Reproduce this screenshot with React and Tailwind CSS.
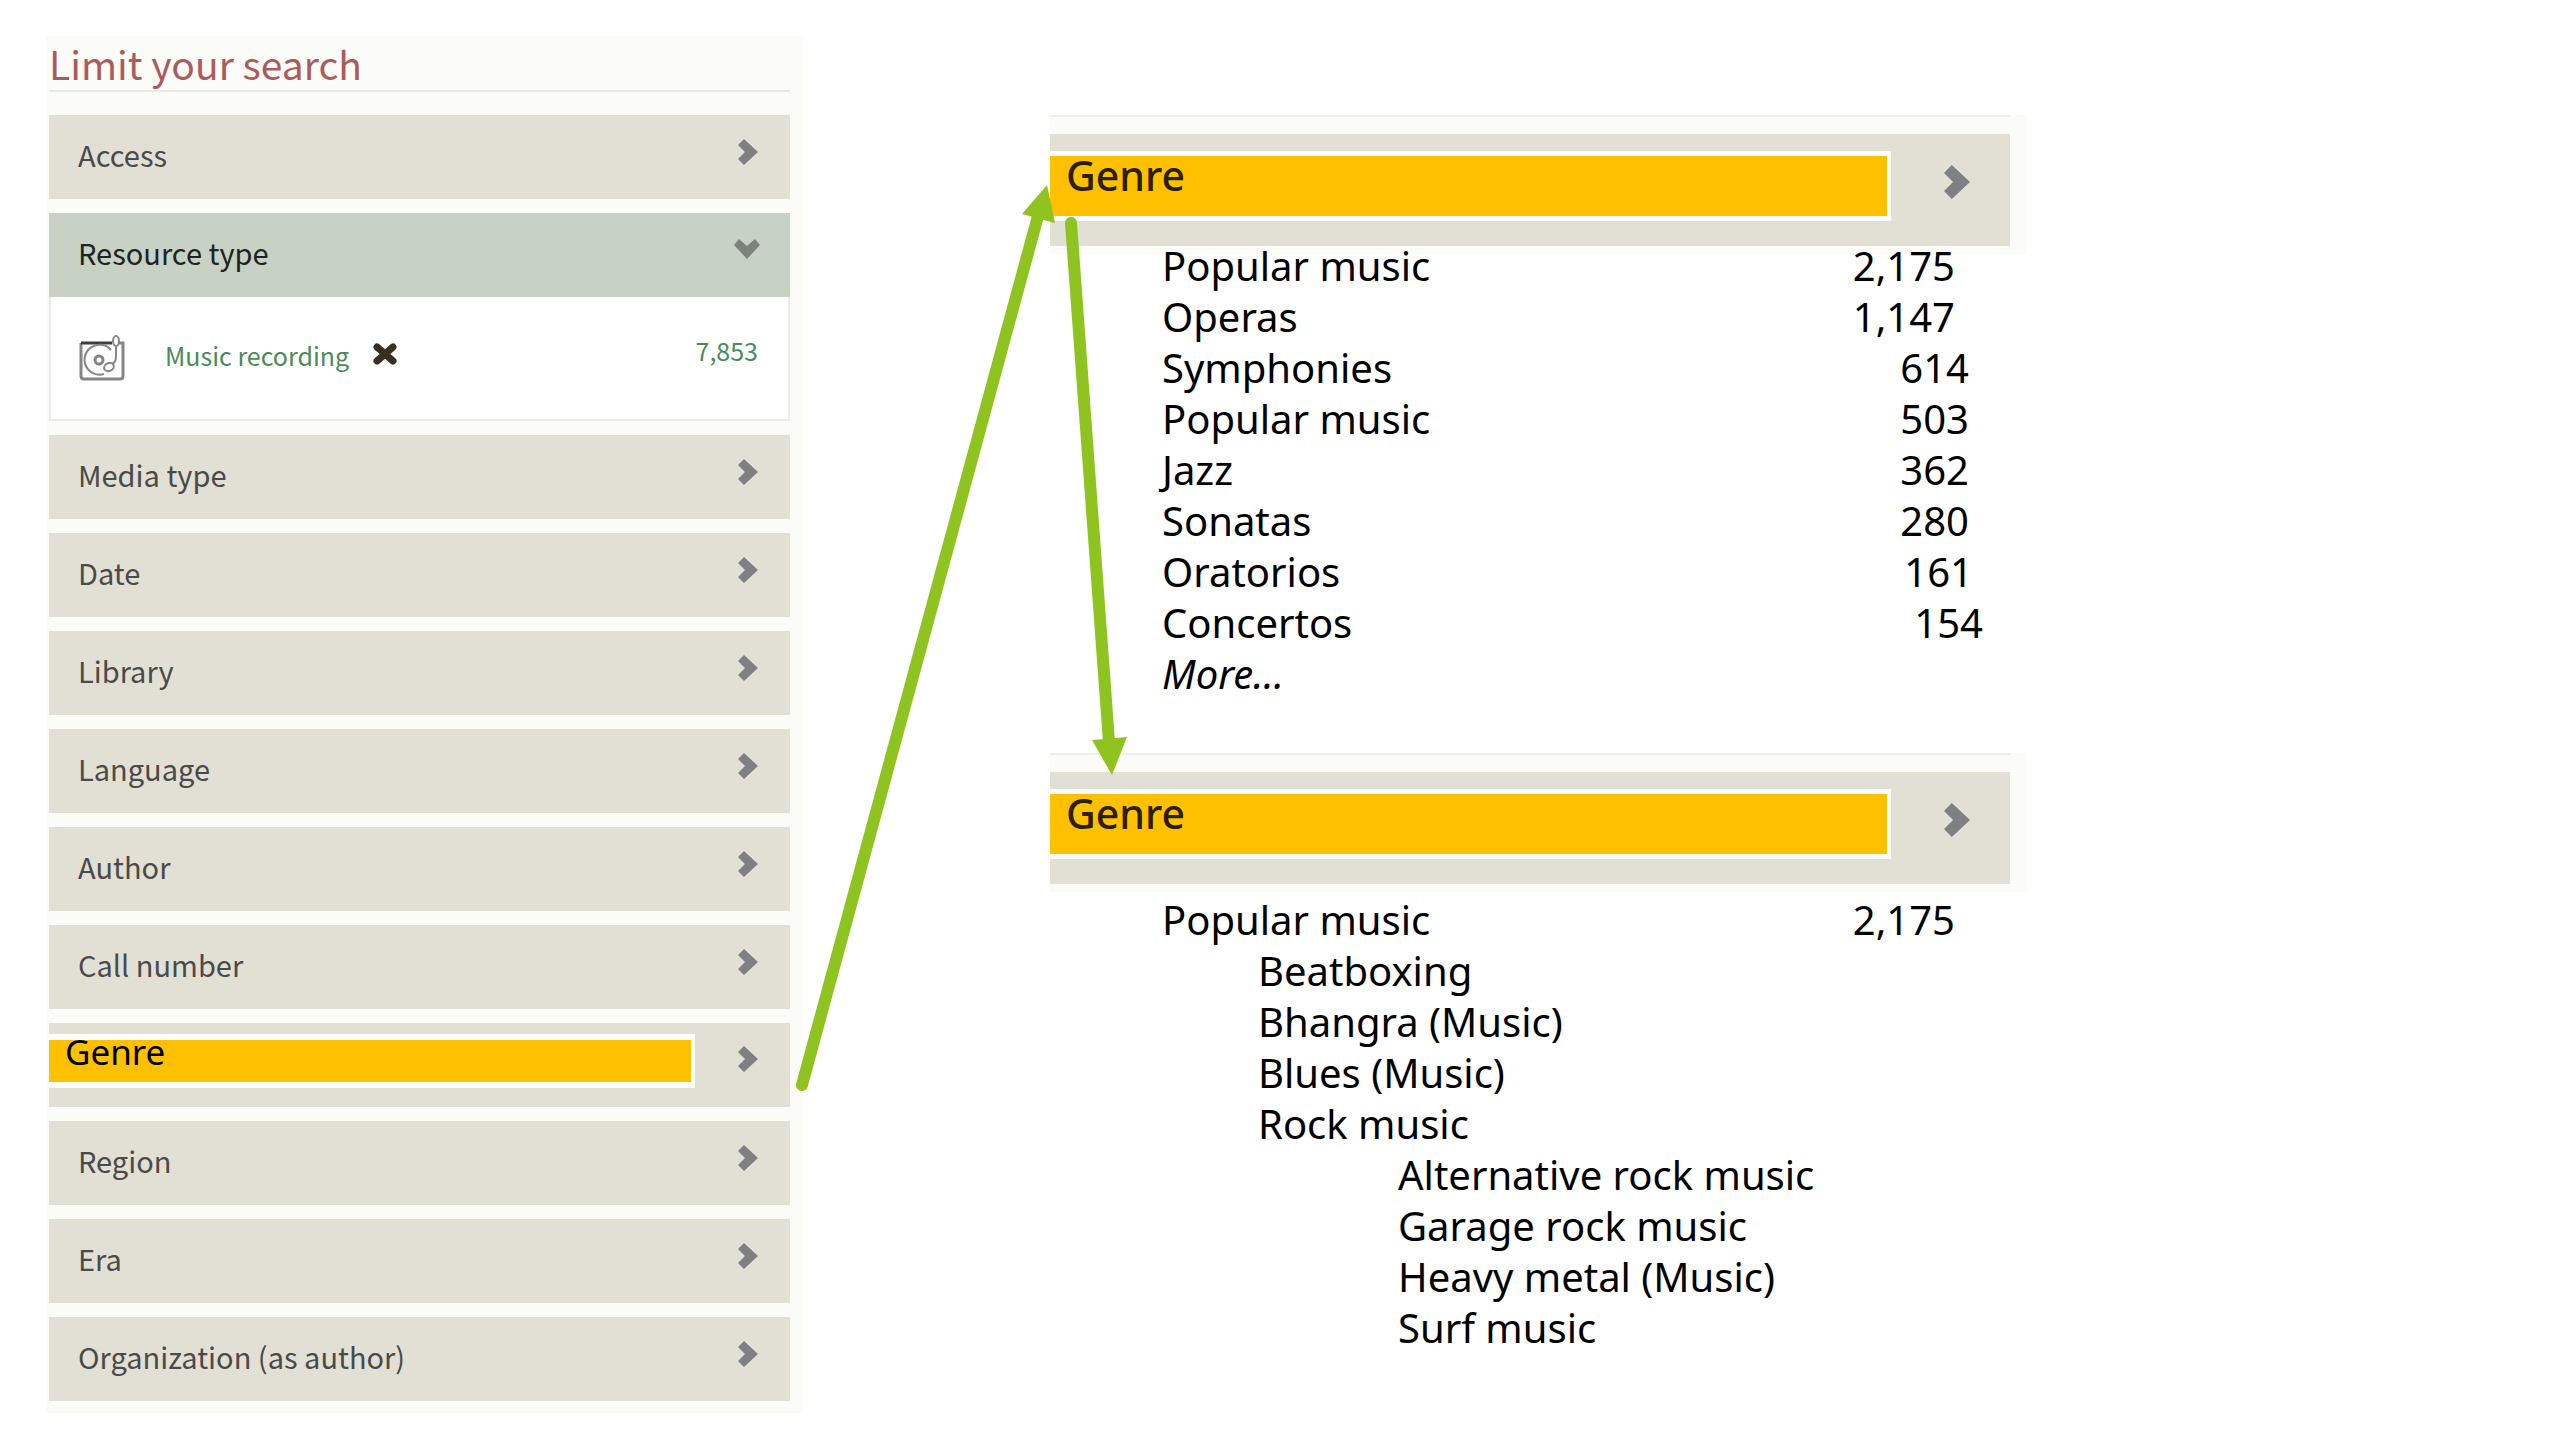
import React, { useState } from "react";

const facets = [
  { name: "Access" },
  { name: "Resource type", open: true },
  { name: "Media type" },
  { name: "Date" },
  { name: "Library" },
  { name: "Language" },
  { name: "Author" },
  { name: "Call number" },
  { name: "Genre", highlighted: true },
  { name: "Region" },
  { name: "Era" },
  { name: "Organization (as author)" },
];

const topGenres = [
  { name: "Popular music", count: "2,175", countPad: "pr-[72px]" },
  { name: "Operas", count: "1,147", countPad: "pr-[72px]" },
  { name: "Symphonies", count: "614", countPad: "pr-[58px]" },
  { name: "Popular music", count: "503", countPad: "pr-[58px]" },
  { name: "Jazz", count: "362", countPad: "pr-[58px]" },
  { name: "Sonatas", count: "280", countPad: "pr-[58px]" },
  { name: "Oratorios", count: "161", countPad: "pr-[54px]" },
  { name: "Concertos", count: "154", countPad: "pr-[44px]" },
  { name: "More…", more: true },
];

const genreTree = [
  { name: "Popular music", count: "2,175", countPad: "pr-[72px]" },
  { name: "Beatboxing", level: 1 },
  { name: "Bhangra (Music)", level: 1 },
  { name: "Blues (Music)", level: 1 },
  { name: "Rock music", level: 1 },
  { name: "Alternative rock music", level: 2 },
  { name: "Garage rock music", level: 2 },
  { name: "Heavy metal (Music)", level: 2 },
  { name: "Surf music", level: 2 },
];

const indents = ["pl-28", "pl-52", "pl-[348px]"];

const ChevronRight = ({ className }) => (
  <svg viewBox="0 0 20 26" className={className} aria-hidden="true">
    <path d="M6 0 L20 13 L6 26 L0 20 L7 13 L0 6 Z" fill="#7f8083" />
  </svg>
);

const ChevronDown = ({ className }) => (
  <svg viewBox="0 0 26 20" className={className} aria-hidden="true">
    <path d="M5 0 L13 7 L21 0 L26 6 L13 20 L0 6 Z" fill="#7d827c" />
  </svg>
);

const TurntableIcon = () => (
  <svg viewBox="0 0 46 46" className="h-[46px] w-[46px]" aria-hidden="true">
    <g fill="none" stroke="#85858b" strokeWidth="2">
      <path
        d="M2 8 V41 Q2 44 5 44 H41 Q44 44 44 41 V8 H40"
        strokeWidth="3"
      />
      <path d="M2 8 H33" stroke="#3c3c40" strokeWidth="3" />
      <path d="M32 15 A15 15 0 1 0 25 39" />
      <circle cx="20" cy="25" r="4" strokeWidth="3" />
      <ellipse cx="37" cy="6" rx="3" ry="5" />
      <path d="M37 11 V22 Q37 27 33 29" />
      <ellipse cx="30" cy="32" rx="5" ry="4" transform="rotate(-25 30 32)" />
    </g>
  </svg>
);

const RemoveIcon = () => (
  <svg viewBox="0 0 24 22" className="h-[22px] w-6" aria-hidden="true">
    <path
      d="M4 4 L20 18 M20 4 L4 18"
      stroke="#38301f"
      strokeWidth="7"
      strokeLinecap="round"
    />
  </svg>
);

const SelectedType = () => (
  <div className="flex h-[124px] items-start border-2 border-t-0 border-[#ebebe6] bg-white pl-7 pr-[30px] pt-[38px]">
    <TurntableIcon />
    <a
      href="#music-recording"
      className="ml-10 text-[25px] leading-[40px] text-[#4b8b58]"
    >
      Music recording
    </a>
    <button
      type="button"
      aria-label="Remove Music recording"
      className="ml-6 mt-2"
    >
      <RemoveIcon />
    </button>
    <span className="ml-auto text-[25px] leading-[30px] text-[#4b8b58]">
      7,853
    </span>
  </div>
);

const Facet = ({ facet }) => {
  const [open, setOpen] = useState(Boolean(facet.open));

  if (facet.highlighted) {
    return (
      <button
        type="button"
        aria-expanded={false}
        className="flex h-[84px] w-full items-start bg-[#e2dfd5] pr-8 pt-[11px] text-left"
      >
        <span className="flex h-[54px] flex-1 border-y-[6px] border-r-4 border-white bg-[#ffc000] pl-4 font-['Noto_Sans'] text-[35px] leading-6 text-black">
          Genre
        </span>
        <ChevronRight className="ml-[43px] mt-3 h-[26px] w-5" />
      </button>
    );
  }

  return (
    <div>
      <button
        type="button"
        aria-expanded={open}
        onClick={() => setOpen(!open)}
        className={
          facet.open
            ? "flex h-[84px] w-full items-start justify-between bg-[#c7d1c4] pl-[29px] pr-[30px] text-left text-[#1e2421]"
            : "flex h-[84px] w-full items-start justify-between bg-[#e2e0d5] pl-[29px] pr-8 text-left text-[#4a4a49]"
        }
      >
        <span className="text-[29px] leading-[78px]">{facet.name}</span>
        {open ? (
          <ChevronDown className="mt-[26px] h-5 w-[26px]" />
        ) : (
          <ChevronRight className="mt-6 h-[26px] w-5" />
        )}
      </button>
      {open && <SelectedType />}
    </div>
  );
};

const GenreHeader = () => (
  <div className="bg-[#fbfbf8] pb-2">
    <div className="mr-[17px] border-t-2 border-[#eeeeeb] pt-[17px]">
      <button
        type="button"
        className="flex h-[112px] w-full items-start bg-[#e2e0d5] pr-10 pt-[17px] text-left"
      >
        <span className="flex h-[70px] flex-1 border-y-[5px] border-r-4 border-white bg-[#ffc000] pl-4 font-['Noto_Sans'] text-[41px] font-medium leading-[38px] text-[#2b2003]">
          Genre
        </span>
        <ChevronRight className="ml-[53px] mt-[13px] h-9 w-[26px]" />
      </button>
    </div>
  </div>
);

const GenreTable = ({ rows, label }) => (
  <table
    aria-label={label}
    className="w-full font-['Noto_Sans'] text-[40px] leading-[51px] text-black"
  >
    <tbody>
      {rows.map((row, index) => (
        <tr key={index}>
          <td className={`p-0 ${indents[row.level || 0]}`}>
            {row.more ? (
              <a href="#more" className="italic">
                {row.name}
              </a>
            ) : (
              row.name
            )}
          </td>
          <td className={`p-0 text-right ${row.countPad || ""}`}>
            {row.count}
          </td>
        </tr>
      ))}
    </tbody>
  </table>
);

// Links the sidebar facet to its list, and the list to the expanded tree
const Arrows = () => (
  <svg
    viewBox="790 175 340 930"
    className="pointer-events-none absolute left-[790px] top-[175px] h-[930px] w-[340px]"
    aria-hidden="true"
  >
    <path
      d="M802 1085 L1038 216 M1071 223 L1109 742"
      stroke="#8fc31f"
      strokeWidth="12"
      strokeLinecap="round"
      fill="none"
    />
    <path
      d="M1047 185 L1022 214 L1055 223 Z M1112 775 L1092 740 L1127 737 Z"
      fill="#8fc31f"
    />
  </svg>
);

const App = () => {
  return (
    <div className="relative flex min-h-screen items-start bg-white pl-[46px]">
      <aside className="mt-9 w-[757px] shrink-0 bg-[#fbfbf8] pb-3 pl-[3px] pr-[13px] font-['Noto_Sans_CJK_SC',sans-serif]">
        <h2 className="border-b-2 border-[#e8e8e3] text-[39px] leading-[54px] text-[#ac5a5c]">
          Limit your search
        </h2>
        <div className="mt-[23px] flex flex-col gap-[14px]">
          {facets.map((facet) => (
            <Facet key={facet.name} facet={facet} />
          ))}
        </div>
      </aside>
      <main className="ml-[247px] mt-[115px] max-w-[977px] flex-1">
        <section>
          <GenreHeader />
          <div className="-mt-[14px]">
            <GenreTable rows={topGenres} label="Genres" />
          </div>
        </section>
        <section className="mt-[54px]">
          <GenreHeader />
          <div className="mt-[2px]">
            <GenreTable rows={genreTree} label="Popular music genres" />
          </div>
        </section>
      </main>
      <Arrows />
    </div>
  );
};

export default App;
